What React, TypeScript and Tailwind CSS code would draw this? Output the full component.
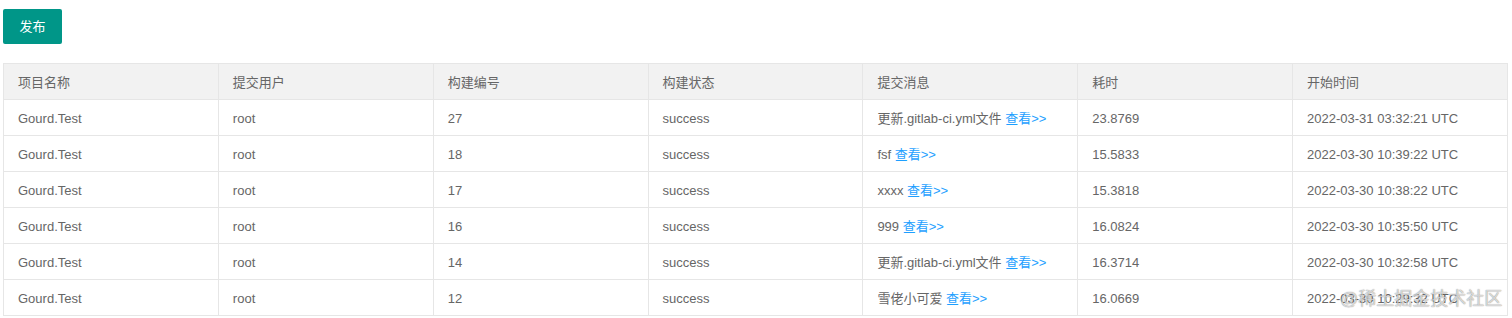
const headers = ["项目名称", "提交用户", "构建编号", "构建状态", "提交消息", "耗时", "开始时间"];

const rows = [
  { no: "27", msg: "更新.gitlab-ci.yml文件", cost: "23.8769", time: "2022-03-31 03:32:21 UTC" },
  { no: "18", msg: "fsf", cost: "15.5833", time: "2022-03-30 10:39:22 UTC" },
  { no: "17", msg: "xxxx", cost: "15.3818", time: "2022-03-30 10:38:22 UTC" },
  { no: "16", msg: "999", cost: "16.0824", time: "2022-03-30 10:35:50 UTC" },
  { no: "14", msg: "更新.gitlab-ci.yml文件", cost: "16.3714", time: "2022-03-30 10:32:58 UTC" },
  { no: "12", msg: "雪佬小可爱", cost: "16.0669", time: "2022-03-30 10:29:32 UTC" },
];

const cell = "border border-[#e6e6e6] pl-[14px] pt-[2px]";

export default function App() {
  return (
    <div
      className="relative w-[1512px] h-[318px] bg-white overflow-hidden text-[13px] text-[#666]"
      style={{ fontFamily: '"Liberation Sans", Arial, "Noto Sans CJK SC", sans-serif' }}
    >
      <div className="pl-[3px] pt-[9px]">
        <button className="h-[35px] w-[59px] rounded-[2px] bg-[#009688] text-white text-[13px]">
          发布
        </button>
      </div>
      <div className="pl-[3px] pt-[19px]">
        <table className="w-[1505px] table-fixed border-collapse">
          <thead>
            <tr className="bg-[#f2f2f2] h-[36px]">
              {headers.map((h) => (
                <th key={h} className={cell + " text-left font-normal"}>
                  {h}
                </th>
              ))}
            </tr>
          </thead>
          <tbody>
            {rows.map((r) => (
              <tr key={r.no} className="h-[36px]">
                <td className={cell}>Gourd.Test</td>
                <td className={cell}>root</td>
                <td className={cell}>{r.no}</td>
                <td className={cell}>success</td>
                <td className={cell}>
                  {r.msg} <span className="text-[#1e9fff]">查看&gt;&gt;</span>
                </td>
                <td className={cell}>{r.cost}</td>
                <td className={cell}>{r.time}</td>
              </tr>
            ))}
          </tbody>
        </table>
      </div>
      <div className="absolute left-[1340px] top-[286px] text-[18px] text-white/70 [text-shadow:0_0_1px_rgba(0,0,0,0.6)]">
        @稀土掘金技术社区
      </div>
    </div>
  );
}
